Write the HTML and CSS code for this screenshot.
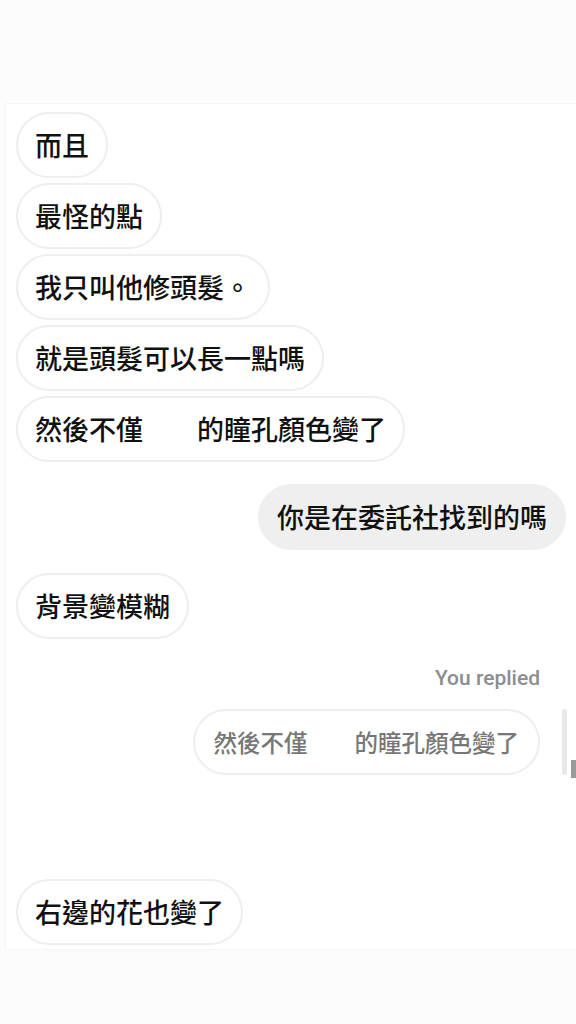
FILE: index.html
```html
<!DOCTYPE html>
<html lang="zh-Hant">

    <head>
        <meta charset="UTF-8">
        <meta name="viewport" content="width=device-width, initial-scale=1.0">
        <title>Chat</title>

        <link rel="stylesheet" href="styles.css">
    </head>

    <body>
        <div class="top"></div>

        <main class="chat">
            <div class="group">
                <div class="bubble">而且</div>
                <div class="bubble">最怪的點</div>
                <div class="bubble">我只叫他修頭髮。</div>
                <div class="bubble">就是頭髮可以長一點嗎</div>
                <div class="bubble">然後不僅<span class="redact"></span>的瞳孔顏色變了</div>
            </div>

            <div class="bubble mine">你是在委託社找到的嗎</div>

            <div class="bubble single">背景變模糊</div>

            <div class="replied">You replied</div>
            <div class="reply-row">
                <div class="bubble quote">然後不僅<span class="redact"></span>的瞳孔顏色變了</div>
                <span class="reply-bar"></span>
                <span class="scroll-bit"></span>
            </div>

            <div class="bubble last">右邊的花也變了</div>
        </main>
    </body>

</html>
```

FILE: styles.css
```css
* {
    box-sizing: border-box;
}

body {
    margin: 0;
    background-color: #fcfcfc;
    font-family: "Noto Sans CJK TC", "Noto Sans", sans-serif;
    color: #111;
}

.top {
    height: 103px;
}

.chat {
    margin-left: 5px;
    background-color: #fff;
    border-top: 1px solid #f6f6f6;
    border-left: 1px solid #f5f5f5;
    border-bottom: 1px solid #f6f6f6;
    padding: 8px 0 4px 10px;
    display: flex;
    flex-direction: column;
    align-items: flex-start;
}

.group {
    display: flex;
    flex-direction: column;
    align-items: flex-start;
    gap: 5px;
}

.bubble {
    font-size: 27px;
    font-weight: 500;
    line-height: 34px;
    padding: 14px 17px;
    border: 2px solid #eeeeee;
    border-radius: 33px;
    background-color: #fff;
    white-space: nowrap;
}

.redact {
    display: inline-block;
    width: 2em;
}

.mine {
    align-self: flex-end;
    margin-top: 22px;
    margin-right: 10px;
    background-color: #efefef;
    border-color: #efefef;
}

.single {
    margin-top: 23px;
}

.replied {
    align-self: flex-end;
    margin-top: 27px;
    margin-right: 36px;
    font-family: Roboto, "Liberation Sans", sans-serif;
    font-size: 21px;
    font-weight: 500;
    line-height: 24px;
    color: #8b8d91;
}

.reply-row {
    align-self: flex-end;
    display: flex;
    align-items: stretch;
    margin-top: 19px;
}

.quote {
    font-size: 23.5px;
    padding: 14px 19px;
    color: #777;
}

.reply-bar {
    width: 5px;
    margin-left: 22px;
    border-radius: 3px;
    background-color: #e8e8e8;
}

.scroll-bit {
    align-self: flex-end;
    width: 5px;
    height: 18px;
    margin-left: 4px;
    margin-bottom: -3px;
    background-color: #9a9a9a;
}

.last {
    margin-top: 104px;
}
```
